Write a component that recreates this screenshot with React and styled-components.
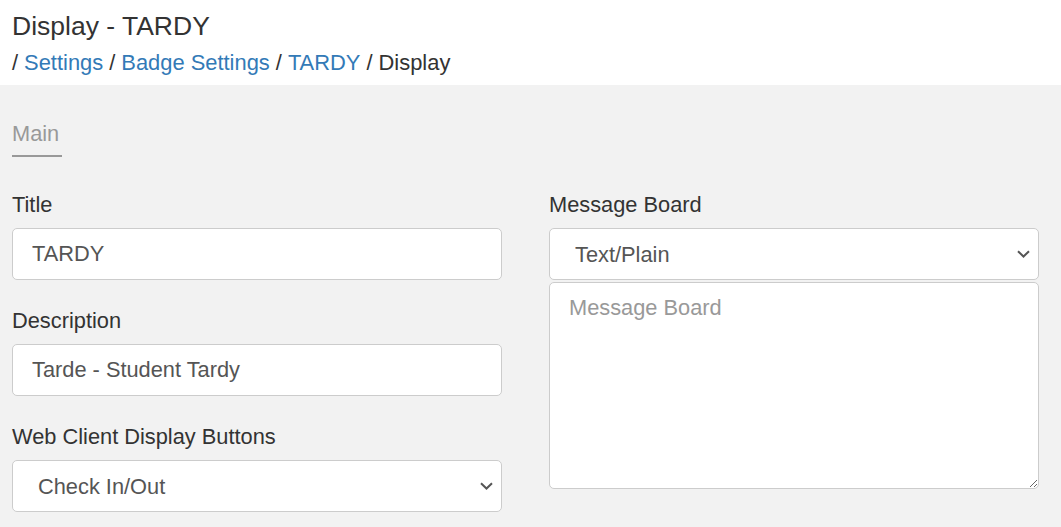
import React from "react";
import styled, { createGlobalStyle } from "styled-components";

const GlobalStyle = createGlobalStyle`
  body {
    margin: 0;
    background: #f2f2f2;
    font-family: "Liberation Sans", Arial, Helvetica, sans-serif;
    color: #333;
  }
  * {
    box-sizing: border-box;
  }
`;

const crumbs = [
  { label: "Settings", href: "#" },
  { label: "Badge Settings", href: "#" },
  { label: "TARDY", href: "#" },
  { label: "Display" },
];

const Chevron = () => (
  <ChevronIcon width="13" height="8" viewBox="0 0 13 8" aria-hidden="true">
    <path d="M1 1.2 L6.5 6.5 L12 1.2" fill="none" stroke="#555" strokeWidth="2" />
  </ChevronIcon>
);

const Dropdown = ({ value, options }) => (
  <SelectWrap>
    <Select defaultValue={value}>
      {options.map((o) => (
        <option key={o.value} value={o.value}>
          {o.label}
        </option>
      ))}
    </Select>
    <Chevron />
  </SelectWrap>
);

const App = () => {
  return (
    <Page>
      <GlobalStyle />
      <Header>
        <PageTitle>Display - TARDY</PageTitle>
        <Breadcrumb>
          {crumbs.map((c) => (
            <React.Fragment key={c.label}>
              <Sep>/</Sep>
              {c.href ? <Crumb href={c.href}>{c.label}</Crumb> : <span>{c.label}</span>}
            </React.Fragment>
          ))}
        </Breadcrumb>
      </Header>

      <Body>
        <Tabs>
          <Tab $active>Main</Tab>
        </Tabs>

        <Columns>
          <Column>
            <Group>
              <Label>Title</Label>
              <Input defaultValue="TARDY" />
            </Group>
            <Group>
              <Label>Description</Label>
              <Input defaultValue="Tarde - Student Tardy" />
            </Group>
            <Group>
              <Label>Web Client Display Buttons</Label>
              <Dropdown
                value="checkinout"
                options={[{ value: "checkinout", label: "Check In/Out" }]}
              />
            </Group>
          </Column>

          <Column>
            <Group>
              <Label>Message Board</Label>
              <Dropdown value="plain" options={[{ value: "plain", label: "Text/Plain" }]} />
              <TextArea placeholder="Message Board" />
            </Group>
          </Column>
        </Columns>
      </Body>
    </Page>
  );
};

export default App;

const Page = styled.div`
  min-height: 100vh;
  background: #f2f2f2;
`;

const Header = styled.div`
  background: #ffffff;
  height: 85px;
  padding: 11px 12px 0;
`;

const PageTitle = styled.h1`
  margin: 0;
  font-size: 26.5px;
  font-weight: normal;
  line-height: 31px;
  color: #333;
`;

const Breadcrumb = styled.div`
  margin-top: 6px;
  font-size: 21.9px;
  line-height: 29px;
  color: #333;
`;

const Sep = styled.span`
  margin-right: 6px;
  &:not(:first-child) {
    margin-left: 6px;
  }
`;

const Crumb = styled.a`
  color: #337ab7;
  text-decoration: none;
`;

const Body = styled.div`
  padding: 34px 22px 0 12px;
`;

const Tabs = styled.div`
  display: flex;
`;

const Tab = styled.div`
  font-size: 21.8px;
  line-height: 29px;
  color: #999;
  padding-bottom: 7px;
  border-bottom: 2px solid ${(p) => (p.$active ? "#999" : "transparent")};
  min-width: 50px;
`;

const Columns = styled.div`
  display: grid;
  grid-template-columns: 1fr 1fr;
  column-gap: 47px;
  margin-top: 33px;
`;

const Column = styled.div`
  display: flex;
  flex-direction: column;
  gap: 26px;
`;

const Group = styled.div`
  display: flex;
  flex-direction: column;
`;

const Label = styled.label`
  font-size: 21.8px;
  line-height: 29px;
  color: #333;
  margin-bottom: 9px;
`;

const fieldBase = `
  width: 100%;
  font-family: "Liberation Sans", Arial, Helvetica, sans-serif;
  font-size: 21.8px;
  color: #555;
  background: #fff;
  border: 1px solid #ccc;
  border-radius: 5px;
  outline: none;
`;

const Input = styled.input`
  ${fieldBase}
  height: 52px;
  padding: 0 19px;
`;

const SelectWrap = styled.div`
  position: relative;
`;

const Select = styled.select`
  ${fieldBase}
  display: block;
  height: 52px;
  padding: 0 36px 0 25px;
  appearance: none;
`;

const ChevronIcon = styled.svg`
  position: absolute;
  right: 9px;
  top: 50%;
  transform: translateY(-50%);
  pointer-events: none;
`;

const TextArea = styled.textarea`
  ${fieldBase}
  height: 207px;
  margin-top: 2px;
  padding: 12px 19px;
  line-height: 1.2;
  resize: vertical;

  &::placeholder {
    color: #999;
  }
`;
